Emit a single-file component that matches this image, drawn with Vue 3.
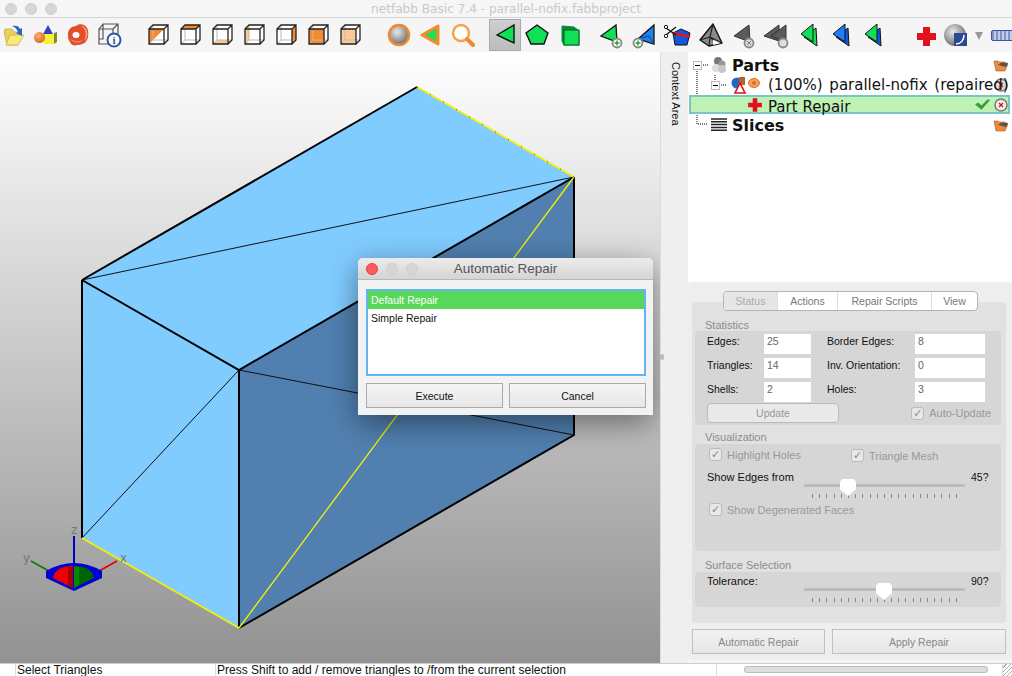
<template>
  <div class="window">
    <div class="titlebar">
      <span class="light"></span><span class="light"></span><span class="light"></span>
      <span class="title">netfabb Basic 7.4 - parallel-nofix.fabbproject</span>
    </div>

    <div class="toolbar">
      <div class="group">
        <svg class="ic" viewBox="0 0 32 32">
          <path d="M7 13l1-3h7l2 3h5l-2 13H10z" fill="#e8cf58" stroke="#cdb044" stroke-width=".8" />
          <path d="M9 26l4-10h14l-6 10z" fill="#f8ea7a" stroke="#cdb044" stroke-width=".8" />
          <path d="M15 7c4-1 7 0 8 3l2-1v8l-6-3 2-1c-1-3-3-5-6-6z" fill="#2a62c8" />
        </svg>
        <svg class="ic" viewBox="0 0 32 32">
          <defs>
            <radialGradient id="orange" cx="40%" cy="35%" r="70%">
              <stop offset="0" stop-color="#ffb070" />
              <stop offset="1" stop-color="#d8641c" />
            </radialGradient>
          </defs>
          <path d="M19 6l6 11H13z" fill="#3340c4" />
          <path d="M15 15h10v10H15z" fill="#f6f038" />
          <path d="M25 14l3-1v10l-3 2z" fill="#8a8820" />
          <circle cx="10.500" cy="18.500" r="5.500" fill="url(#orange)" />
        </svg>
        <svg class="ic" viewBox="0 0 32 32">
          <path d="M7 15c0-5 4-8 8-8 2-2 5-2 8-1 4 2 5 7 4 12-1 6-6 8-11 8-3 1-6 0-7-3-2-2-2-5-2-8z" fill="#e2502a" />
          <path d="M20 7c5 3 6 9 3 15 3-2 4-6 3-10-1-3-3-5-6-5z" fill="#f4a080" />
          <path d="M9 20c3 4 9 5 13 1-4 2-9 1-13-1z" fill="#f08a60" />
          <ellipse cx="15" cy="16" rx="3.500" ry="3" fill="#fff" />
        </svg>
        <svg class="ic" viewBox="0 0 32 32">
          <path d="M6 10h14v15H6zM6 10l4-5h15v14l-5 6M20 10l5-5M10 5v15H6" fill="none" stroke="#555" stroke-width="1.200" />
          <circle cx="21" cy="21" r="6.500" fill="#fff" stroke="#33569c" stroke-width="2" />
          <text x="21" y="25" class="ic-i">i</text>
        </svg>
      </div>

      <div class="group cubes">
        <svg v-for="c in cubes" :key="c.id" class="ic" viewBox="0 0 32 32">
          <rect x="7" y="10" width="15" height="15" fill="#fff" />
          <path d="M7 10l4-4h15l-4 4z" fill="#fff" />
          <path d="M22 10l4-4v15l-4 4z" fill="#fff" />
          <polygon :points="c.pts" :fill="c.fill" />
          <path d="M11 6v15H26M11 21l-4 4" fill="none" stroke="#bbb" />
          <path d="M7 10h15v15H7zM7 10l4-4h15v15l-4 4M22 10l4-4" fill="none" stroke="#222" stroke-width="1.300" />
        </svg>
      </div>

      <div class="group views">
        <svg class="ic" viewBox="0 0 32 32">
          <defs>
            <radialGradient id="ball" cx="40%" cy="35%" r="70%">
              <stop offset="0" stop-color="#e8e8e8" />
              <stop offset="1" stop-color="#666" />
            </radialGradient>
          </defs>
          <circle cx="16" cy="16" r="10" fill="url(#ball)" stroke="#f08a30" stroke-width="2.500" />
        </svg>
        <svg class="ic" viewBox="0 0 32 32">
          <path d="M7 16l16-9v18z" fill="#22dd55" stroke="#f58a2c" stroke-width="3" stroke-linejoin="round" />
        </svg>
        <svg class="ic" viewBox="0 0 32 32">
          <circle cx="14" cy="14" r="8" fill="#fff" stroke="#f8a24a" stroke-width="2.500" />
          <path d="M20 20l6 6" stroke="#f08a30" stroke-width="4" stroke-linecap="round" />
        </svg>
      </div>

      <div class="group picks">
        <svg class="ic active" viewBox="0 0 32 32">
          <path d="M8 16l17-10v18z" fill="#0fe055" stroke="#111" stroke-width="1.400" />
        </svg>
        <svg class="ic" viewBox="0 0 32 32">
          <path d="M16 6l11 8-4 11H10L5 14z" fill="#0fe055" stroke="#111" stroke-width="1.400" />
        </svg>
        <svg class="ic" viewBox="0 0 32 32">
          <path d="M9 7l12 1 5 4v14H11L9 22z" fill="#0a8a30" stroke="#084" />
          <rect x="11" y="11" width="15" height="15" fill="#0fe055" stroke="#0a5a20" />
        </svg>
      </div>

      <div class="group wide">
        <svg class="ic" viewBox="0 0 32 32">
          <path d="M5 17L20 6l1 17z" fill="#0fe055" stroke="#111" stroke-width="1.300" />
          <circle cx="21" cy="24" r="4.500" fill="#fff" stroke="#888" stroke-width="1.800" />
          <path d="M18.500 24h5M21 21.500v5" stroke="#2a2" stroke-width="1.500" />
        </svg>
        <svg class="ic" viewBox="0 0 32 32">
          <path d="M9 20L25 6v19z" fill="#1f7fee" stroke="#111" stroke-width="1.300" />
          <path d="M9 20l11-3 5 8" fill="none" stroke="#0c3f90" />
          <circle cx="9" cy="24" r="4.500" fill="#fff" stroke="#888" stroke-width="1.800" />
          <path d="M6.500 24h5M9 21.500v5" stroke="#2a2" stroke-width="1.500" />
        </svg>
        <svg class="ic" viewBox="0 0 32 32">
          <path d="M11 14l8-4 9 4-3 12H13z" fill="#1158dd" stroke="#111" />
          <path d="M11 14l17 4" stroke="#e11" stroke-width="2.600" />
          <path d="M4 9l10 7M4 16l10-8" stroke="#111" stroke-width="1.300" />
          <circle cx="4" cy="8" r="1.700" fill="#fff" stroke="#111" />
          <circle cx="4" cy="17" r="1.700" fill="#fff" stroke="#111" />
        </svg>
        <svg class="ic" viewBox="0 0 32 32">
          <path d="M18 5l9 19-13 3-9-6z" fill="#8a8a8a" stroke="#111" stroke-width="1.400" stroke-linejoin="round" />
          <path d="M18 21l8 3-8 2z" fill="#fff" />
          <path d="M18 5l-3 13 12 6M5 21l10-3-1 9M15 18l3 3" fill="none" stroke="#222" stroke-width="1.200" />
        </svg>
        <svg class="ic" viewBox="0 0 32 32">
          <path d="M6 17L21 6l1 17z" fill="#5a5a5a" stroke="#333" />
          <circle cx="21" cy="24" r="4.500" fill="#ddd" stroke="#888" stroke-width="1.800" />
          <path d="M19 22l4 4M23 22l-4 4" stroke="#777" />
        </svg>
        <svg class="ic" viewBox="0 0 32 32">
          <path d="M3 17L18 6v16z" fill="#5a5a5a" stroke="#333" />
          <path d="M10 17L25 6v17z" fill="#5a5a5a" stroke="#333" />
          <circle cx="22" cy="24" r="4.500" fill="#ddd" stroke="#888" stroke-width="1.800" />
        </svg>
      </div>

      <div class="group">
        <svg class="ic" viewBox="0 0 32 32">
          <path d="M11 18l12-9 1 18z" fill="#0fe055" stroke="#111" />
          <path d="M8 15L20 5v18z" fill="#0fe055" stroke="#111" />
        </svg>
        <svg class="ic" viewBox="0 0 32 32">
          <path d="M11 18l12-9 1 18z" fill="#1158dd" stroke="#111" />
          <path d="M8 15L20 5v18z" fill="#1f7fee" stroke="#111" />
        </svg>
        <svg class="ic" viewBox="0 0 32 32">
          <path d="M11 18l12-9 1 18z" fill="#1158dd" stroke="#111" />
          <path d="M8 15L20 5v18z" fill="#0fe055" stroke="#111" />
        </svg>
      </div>

      <div class="group tail">
        <svg class="ic" viewBox="0 0 32 32">
          <path d="M13 7h7v6h6v7h-6v6h-7v-6H7v-7h6z" fill="#e0101c" />
        </svg>
        <svg class="ic" viewBox="0 0 32 32">
          <circle cx="13" cy="15" r="11" fill="url(#ball)" />
          <rect x="12" y="13" width="13" height="13" fill="#2a4a94" />
          <path d="M14 24c5 0 8-4 8-9" fill="none" stroke="#fff" stroke-width="1.500" />
        </svg>
        <span class="drop"></span>
        <div class="ruler"></div>
      </div>
    </div>

    <div class="main">
      <div class="viewport">
        <svg class="scene" viewBox="0 0 660 611">
          <g transform="translate(0 -52)">
            <polygon points="82,280 417,87 574,177 239,370" fill="#80ccff" />
            <polygon points="82,280 239,370 239,628 82,538" fill="#80ccff" />
            <polygon points="239,370 574,177 574,435 239,628" fill="#5180b0" />
            <path d="M82 280L574 177M239 370L82 538M239 370L574 435" stroke="#111" fill="none" />
            <path d="M82 280L417 87M82 280L239 370L574 177M82 280V538M239 370V628M574 177V435L239 628" stroke="#000" stroke-width="2" fill="none" />
            <path d="M417 87L574 177M82 538L239 628" stroke="#f6f000" stroke-width="1.700" fill="none" />
            <path d="M239 628L574 177" stroke="#f6f000" stroke-width="1.300" fill="none" />
            <path d="M417 87L574 177" stroke="#222" stroke-width=".8" stroke-dasharray="1 14" fill="none" />

            <path d="M74 564V536" stroke="#0000c8" stroke-width="2" />
            <path d="M31 561L56 575" stroke="#008000" stroke-width="1.500" />
            <path d="M117 561L92 575" stroke="#e00000" stroke-width="1.500" />
            <path d="M46 571Q74 555 102 571V578L74 591 46 578z" fill="#0000d8" />
            <path d="M53 578Q55 566 73 566V588z" fill="#f00000" />
            <path d="M68 567h5v21l-5-2z" fill="#a80000" />
            <path d="M74 566Q92 566 94 578L74 588z" fill="#006400" />
            <path d="M74 567h5v18l-5 3z" fill="#008a00" />
            <text x="71" y="534" class="axis">z</text>
            <text x="23" y="562" class="axis">y</text>
            <text x="120" y="562" class="axis">x</text>
          </g>
        </svg>

        <div class="dialog">
          <div class="dialog-title">
            <span class="light red"></span><span class="light"></span><span class="light"></span>
            <span class="dialog-name">Automatic Repair</span>
          </div>
          <div class="dialog-body">
            <div class="listbox">
              <div class="list-row selected">Default Repair</div>
              <div class="list-row">Simple Repair</div>
            </div>
            <div class="dialog-buttons">
              <button class="dlg-btn">Execute</button>
              <button class="dlg-btn">Cancel</button>
            </div>
          </div>
        </div>
      </div>

      <div class="context">
        <span class="context-label">Context Area</span>
        <span class="grip"></span>
      </div>

      <div class="side">
        <div class="tree">
          <svg class="tree-lines" width="324" height="90">
            <path d="M13 13H20M9 17V72H20M27 23V29M31 33H38M45 43V52H59" stroke="#000" stroke-dasharray="1 1" fill="none" />
            <rect x="5.500" y="9.500" width="8" height="8" fill="#fff" stroke="#bbb" />
            <path d="M7 13.500h5" stroke="#000" />
            <rect x="23.500" y="29.500" width="8" height="8" fill="#fff" stroke="#bbb" />
            <path d="M25 33.500h5" stroke="#000" />
          </svg>
          <div class="row bold parts">
            <svg class="tree-ic" viewBox="0 0 20 18">
              <circle cx="9" cy="5" r="4" fill="#777" />
              <circle cx="13" cy="8" r="3.500" fill="#999" />
              <circle cx="7" cy="12" r="4" fill="#ddd" />
              <circle cx="13" cy="13" r="4" fill="#c8c8c8" />
            </svg>
            <span>Parts</span>
            <svg class="folder" viewBox="0 0 16 13">
              <path d="M1 2h4l1 1h5l4 2-3 7H3z" fill="#f08a3a" stroke="#a85a20" stroke-width=".6" />
              <path d="M5 6c3-3 5-3 10-2l-2 4c-3-1-5-1-8-2z" fill="#555" />
            </svg>
          </div>
          <div class="row model">
            <svg class="model-ic" viewBox="0 0 36 18">
              <circle cx="6" cy="7" r="5.500" fill="#1f68c8" />
              <rect x="8" y="1" width="6" height="8" fill="#b8622a" />
              <path d="M9 7l5 10H4z" fill="#fff" stroke="#e01010" stroke-width="1.600" />
              <ellipse cx="23" cy="7" rx="5.500" ry="4.500" fill="#f2a060" stroke="#e07020" />
              <circle cx="23" cy="7" r="2" fill="#e07020" />
            </svg>
            <span class="model-name">(100%) parallel-nofix (repaired)</span>
            <svg class="close under" viewBox="0 0 14 14">
              <circle cx="7" cy="7" r="6" fill="#ddd" stroke="#777" stroke-width="1.500" />
              <path d="M5 5l4 4M9 5l-4 4" stroke="#e01010" stroke-width="1.300" />
            </svg>
          </div>
          <div class="row repair">
            <svg class="cross" viewBox="0 0 14 14">
              <path d="M5 1h4v4h4v4H9v4H5V9H1V5h4z" fill="#e0101c" />
            </svg>
            <span class="repair-name">Part Repair</span>
            <svg class="check" viewBox="0 0 16 12">
              <path d="M1 6l3-2 3 3 6-6 2 1-8 9z" fill="#3a9a3a" />
            </svg>
            <svg class="close" viewBox="0 0 14 14">
              <circle cx="7" cy="7" r="6" fill="#eee" stroke="#777" stroke-width="1.500" />
              <path d="M5 5l4 4M9 5l-4 4" stroke="#e01010" stroke-width="1.300" />
            </svg>
          </div>
          <div class="row bold slices">
            <svg class="tree-ic" viewBox="0 0 20 14">
              <path d="M2 1h16M2 3.800h16M2 6.600h16M2 9.400h16M2 12.200h16" stroke="#222" stroke-width="1.500" />
            </svg>
            <span>Slices</span>
            <svg class="folder" viewBox="0 0 16 13">
              <path d="M1 2h4l1 1h5l4 2-3 7H3z" fill="#f08a3a" stroke="#a85a20" stroke-width=".6" />
              <path d="M5 6c3-3 5-3 10-2l-2 4c-3-1-5-1-8-2z" fill="#555" />
            </svg>
          </div>
        </div>

        <div class="panel">
          <div class="tabs">
            <span class="tab current">Status</span>
            <span class="tab">Actions</span>
            <span class="tab">Repair Scripts</span>
            <span class="tab">View</span>
          </div>
          <div class="tab-body">
            <div class="legend first">Statistics</div>
            <div class="box stats">
              <div class="stat-grid">
                <template v-for="s in stats" :key="s.a">
                  <label>{{ s.a }}</label><span class="field">{{ s.av }}</span>
                  <label>{{ s.b }}</label><span class="field">{{ s.bv }}</span>
                </template>
              </div>
              <div class="stat-foot">
                <button class="update">Update</button>
                <span class="chk"><i class="box-ic">&#10003;</i>Auto-Update</span>
              </div>
            </div>

            <div class="legend">Visualization</div>
            <div class="box vis">
              <div class="chk-row">
                <span class="chk"><i class="box-ic">&#10003;</i>Highlight Holes</span>
                <span class="chk mesh"><i class="box-ic">&#10003;</i>Triangle Mesh</span>
              </div>
              <div class="slider-row">
                <span class="slider-label">Show Edges from</span>
                <div class="slider">
                  <div class="track"><span class="thumb" style="left: 36px"></span></div>
                  <div class="ticks"><i v-for="n in 21" :key="n"></i></div>
                </div>
                <span class="slider-val">45?</span>
              </div>
              <span class="chk degen"><i class="box-ic">&#10003;</i>Show Degenerated Faces</span>
            </div>

            <div class="legend surface">Surface Selection</div>
            <div class="box surf">
              <div class="slider-row">
                <span class="slider-label">Tolerance:</span>
                <div class="slider">
                  <div class="track"><span class="thumb" style="left: 72px"></span></div>
                  <div class="ticks"><i v-for="n in 21" :key="n"></i></div>
                </div>
                <span class="slider-val">90?</span>
              </div>
            </div>
          </div>
          <div class="panel-buttons">
            <button class="panel-btn auto">Automatic Repair</button>
            <button class="panel-btn apply">Apply Repair</button>
          </div>
        </div>
      </div>
    </div>

    <div class="statusbar">
      <span class="st-left">Select Triangles</span>
      <span class="st-mid">Press Shift to add / remove triangles to /from the current selection</span>
      <span class="st-scroll"><i></i></span>
      <span class="st-grip"></span>
    </div>
  </div>
</template>

<script setup>
// faces of the small cube buttons
const cubes = [
  { id: "diag", pts: "7,10 22,10 7,25", fill: "#f58a2c" },
  { id: "top", pts: "7,10 11,6 26,6 22,10", fill: "#f58a2c" },
  { id: "bottom", pts: "11,21 26,21 22,25 7,25", fill: "#fcc894" },
  { id: "left", pts: "7,10 11,6 11,21 7,25", fill: "#fcc894" },
  { id: "right", pts: "22,10 26,6 26,21 22,25", fill: "#f58a2c" },
  { id: "front", pts: "7,10 22,10 22,25 7,25", fill: "#f58a2c" },
  { id: "back", pts: "7,10 22,10 22,25 7,25", fill: "#fcc894" },
];

const stats = [
  { a: "Edges:", av: "25", b: "Border Edges:", bv: "8" },
  { a: "Triangles:", av: "14", b: "Inv. Orientation:", bv: "0" },
  { a: "Shells:", av: "2", b: "Holes:", bv: "3" },
];
</script>

<style>
html,
body {
  margin: 0;
  background: #f5f5f5;
}
</style>

<style scoped>
.window {
  width: 1012px;
  height: 676px;
  display: flex;
  flex-direction: column;
  overflow: hidden;
  font-family: "Liberation Sans", Arial, sans-serif;
  background: #f5f5f5;
}

.titlebar {
  position: relative;
  height: 17px;
  flex: none;
  display: flex;
  align-items: center;
  gap: 8px;
  padding-left: 5px;
  background: #f6f6f6;
  border-bottom: 1px solid #d6d6d6;
}

.light {
  width: 12px;
  height: 12px;
  border-radius: 50%;
  background: #d6d6d6;
  border: 1px solid #cfcfcf;
  box-sizing: border-box;
}

.light.red {
  background: #fc5b57;
  border-color: #e0443e;
}

.title {
  position: absolute;
  left: 0;
  right: 0;
  text-align: center;
  font-family: "DejaVu Sans", sans-serif;
  font-size: 12.100px;
  color: #c9c9c9;
}

.toolbar {
  height: 34px;
  flex: none;
  display: flex;
  margin-left: -3px;
  padding-top: 1px;
  box-sizing: border-box;
}

.group {
  display: flex;
  flex: none;
}

.cubes {
  margin-left: 17px;
}

.views {
  margin-left: 17px;
}

.picks {
  margin-left: 10px;
}

.wide {
  margin-left: 11px;
  gap: 1px;
}

.tail {
  margin-left: 21px;
  align-items: center;
}

.ic {
  width: 32px;
  height: 32px;
  flex: none;
}

.ic.active {
  background: linear-gradient(#d0d0d0, #bcbcbc);
  box-shadow: inset 0 0 0 1px #aaa;
}

.ic-i {
  font: bold 11px "Liberation Serif", serif;
  fill: #33569c;
  text-anchor: middle;
}

.drop {
  width: 0;
  height: 0;
  margin-left: 1px;
  border-left: 4px solid transparent;
  border-right: 4px solid transparent;
  border-top: 8px solid #999;
}

.ruler {
  width: 24px;
  height: 9px;
  margin-left: 8px;
  flex: none;
  border-radius: 2px;
  background: repeating-linear-gradient(90deg, #7f93c8 0 2px, #c4cde8 2px 4px);
  border: 1px solid #3c559c;
}

.main {
  flex: 1;
  min-height: 0;
  display: flex;
}

.viewport {
  position: relative;
  width: 660px;
  flex: none;
  background: linear-gradient(#ffffff, #929292);
}

.scene {
  display: block;
  width: 660px;
  height: 611px;
}

.axis {
  font: 12px "DejaVu Sans", sans-serif;
  fill: #777;
}

.dialog {
  position: absolute;
  left: 358px;
  top: 206px;
  width: 295px;
  height: 157px;
  display: flex;
  flex-direction: column;
  border-radius: 5px 5px 0 0;
  background: #f2f2f2;
  box-shadow: 0 8px 30px rgba(0, 0, 0, 0.45);
}

.dialog-title {
  position: relative;
  height: 21px;
  flex: none;
  display: flex;
  align-items: center;
  gap: 8px;
  padding-left: 8px;
  background: linear-gradient(#ececec, #d4d4d4);
  border-bottom: 1px solid #b8b8b8;
  border-radius: 5px 5px 0 0;
}

.dialog-name {
  position: absolute;
  left: 0;
  right: 0;
  text-align: center;
  font-size: 13.500px;
  color: #555;
}

.dialog-body {
  padding: 9px 7px 7px 8px;
  display: flex;
  flex-direction: column;
  gap: 7px;
}

.listbox {
  height: 87px;
  box-sizing: border-box;
  background: #fff;
  border: 2px solid #62b4f2;
  font-size: 10.500px;
  color: #111;
}

.list-row {
  height: 18px;
  line-height: 18px;
  padding-left: 3px;
}

.list-row.selected {
  background: #58d858;
  color: #fff;
}

.dialog-buttons {
  display: flex;
  gap: 6px;
}

.dlg-btn {
  flex: 1;
  height: 25px;
  padding: 0;
  font: 10.500px "Liberation Sans", sans-serif;
  color: #111;
  background: linear-gradient(#f6f6f6, #e6e6e6);
  border: 1px solid #aaa;
}

.context {
  position: relative;
  width: 28px;
  flex: none;
  box-sizing: border-box;
  padding: 10px 0 0 9px;
  background: #efefef;
  border-left: 1px solid #dcdcdc;
}

.context-label {
  display: block;
  writing-mode: vertical-rl;
  font-size: 11px;
  color: #111;
}

.grip {
  position: absolute;
  left: -1px;
  top: 302px;
  width: 4px;
  height: 6px;
  background: #bbb;
  border-radius: 2px;
}

.side {
  width: 324px;
  flex: none;
  display: flex;
  flex-direction: column;
}

.tree {
  position: relative;
  height: 230px;
  flex: none;
  box-sizing: border-box;
  padding-top: 3px;
  background: #fff;
  font-family: "DejaVu Sans", sans-serif;
  font-size: 15px;
  color: #111;
}

.tree-lines {
  position: absolute;
  left: 0;
  top: 0;
}

.row {
  position: relative;
  height: 20px;
  display: flex;
  align-items: center;
  white-space: nowrap;
}

.bold {
  font-weight: bold;
  font-size: 16px;
  padding-left: 21px;
}

.tree-ic {
  width: 20px;
  height: 18px;
  margin-right: 3px;
}

.folder {
  width: 16px;
  height: 13px;
  margin-left: auto;
  margin-right: 3px;
}

.model {
  padding-left: 43px;
}

.model-ic {
  width: 36px;
  height: 18px;
  flex: none;
}

.model-name {
  margin-left: 1px;
  position: relative;
  z-index: 1;
  word-spacing: 2px;
}

.close {
  width: 14px;
  height: 14px;
  flex: none;
}

.close.under {
  position: absolute;
  right: 4px;
  top: 3px;
}

.repair {
  margin-left: 1px;
  width: 321px;
  height: 19px;
  box-sizing: border-box;
  padding-left: 56px;
  background: #bdf2b4;
  border: 2px solid #79c6c4;
}

.repair-name {
  position: relative;
  top: 2px;
}

.cross {
  width: 16px;
  height: 16px;
  margin-right: 5px;
}

.check {
  width: 17px;
  height: 13px;
  margin-left: auto;
  margin-right: 3px;
}

.slices {
  margin-top: 1px;
}

.panel {
  flex: 1;
  min-height: 0;
  margin-bottom: 3px;
  padding: 9px 6px 7px 4px;
  box-sizing: border-box;
  position: relative;
  background: #eeeeee;
  border-radius: 5px;
  display: flex;
  flex-direction: column;
  font-size: 10.500px;
}

.tabs {
  position: absolute;
  left: 35px;
  top: 9px;
  height: 20px;
  display: flex;
  z-index: 1;
  background: #fff;
  border: 1px solid #b4b4b4;
  border-radius: 4px;
  box-sizing: border-box;
  overflow: hidden;
  color: #777;
}

.tab {
  display: flex;
  align-items: center;
  justify-content: center;
  border-left: 1px solid #ddd;
  width: 59px;
  height: 18px;
}

.tab:nth-child(1) {
  border-left: 0;
  width: 53px;
  background: #e6e6e6;
  color: #aaa;
}

.tab:nth-child(3) {
  width: 93px;
}

.tab:nth-child(4) {
  width: 45px;
}

.tab-body {
  height: 321px;
  flex: none;
  margin-top: 11px;
  box-sizing: border-box;
  padding: 17px 5px 0 3px;
  background: #e1e1e1;
  border-radius: 4px;
}

.legend {
  height: 12px;
  line-height: 12px;
  padding-left: 10px;
  color: #8c8c8c;
  margin-top: 6px;
  font-size: 11px;
}

.legend.first {
  margin-top: 0;
}

.legend.surface {
  margin-top: 8px;
}

.box {
  background: #d6d6d6;
  border-radius: 4px;
  box-sizing: border-box;
}

.stats {
  height: 94px;
  padding: 3px 0 0 12px;
}

.stat-grid {
  display: grid;
  grid-template-columns: 57px 47px 104px 70px;
  grid-auto-rows: 24px;
  align-items: start;
}

.stat-grid label {
  color: #111;
  line-height: 15px;
}

.stat-grid label:nth-child(4n + 3) {
  margin-left: 16px;
}

.field {
  display: block;
  height: 20px;
  line-height: 15px;
  padding-left: 3px;
  box-sizing: border-box;
  background: #fff;
  color: #666;
}

.stat-foot {
  display: flex;
  align-items: center;
  justify-content: space-between;
  margin-top: -3px;
  padding-right: 10px;
}

.update {
  width: 132px;
  height: 20px;
  padding: 0;
  font: 10.500px "Liberation Sans", sans-serif;
  color: #999;
  background: #e9e9e9;
  border: 1px solid #bbb;
  border-radius: 4px;
}

.chk {
  display: inline-flex;
  align-items: center;
  color: #999;
  font-size: 11px;
}

.box-ic {
  width: 13px;
  height: 13px;
  box-sizing: border-box;
  margin-right: 5px;
  display: flex;
  align-items: center;
  justify-content: center;
  font-style: normal;
  font-size: 11px;
  font-family: "DejaVu Sans", sans-serif;
  color: #888;
  background: #e8e8e8;
  border: 1px solid #bbb;
  border-radius: 3px;
}

.vis {
  height: 107px;
  padding: 3px 0 0 14px;
  margin-top: 1px;
}

.chk-row {
  display: flex;
  align-items: center;
}

.mesh {
  margin-left: 50px;
  margin-top: 2px;
}

.slider-row {
  display: flex;
  margin-top: 9px;
  color: #111;
}

.slider-label {
  width: 97px;
  flex: none;
  margin-left: -2px;
  font-size: 11px;
}

.slider {
  width: 161px;
  flex: none;
  padding-top: 13px;
}

.track {
  position: relative;
  height: 3px;
  border-radius: 2px;
  background: #bbb;
}

.thumb {
  position: absolute;
  top: -5px;
  width: 16px;
  height: 17px;
  background: #fff;
  clip-path: polygon(15% 0, 85% 0, 100% 15%, 100% 60%, 50% 100%, 0 60%, 0 15%);
}

.ticks {
  display: flex;
  justify-content: space-between;
  margin: 7px 8px 0;
}

.ticks i {
  width: 1px;
  height: 4px;
  background: #888;
}

.slider-val {
  margin-left: 6px;
}

.degen {
  margin-top: 5px;
}

.surf {
  height: 35px;
  padding: 3px 0 0 14px;
  margin-top: 1px;
}

.surf .slider-row {
  margin-top: 0;
}

.panel-buttons {
  display: flex;
  gap: 7px;
  margin-top: 6px;
}

.panel-btn {
  height: 25px;
  padding: 0;
  font: 10.500px "Liberation Sans", sans-serif;
  color: #888;
  background: linear-gradient(#f2f2f2, #e6e6e6);
  border: 1px solid #c0c0c0;
}

.auto {
  width: 133px;
}

.apply {
  width: 174px;
}

.statusbar {
  height: 13px;
  flex: none;
  box-sizing: border-box;
  position: relative;
  display: flex;
  align-items: flex-start;
  background: #fff;
  border-top: 1px solid #ccc;
  font-size: 12px;
  color: #111;
  overflow: hidden;
}

.st-left {
  width: 198px;
  margin-left: 15px;
  padding-left: 1px;
  border-left: 1px solid #ddd;
  flex: none;
  height: 12px;
  line-height: 12px;
}

.st-mid {
  width: 499px;
  padding-left: 1px;
  flex: none;
  border-left: 1px solid #ddd;
  border-right: 1px solid #ddd;
  height: 12px;
  line-height: 12px;
}

.st-scroll {
  margin-left: 27px;
  width: 244px;
  flex: none;
  padding-top: 2px;
}

.st-scroll i {
  display: block;
  height: 5px;
  border-radius: 3px;
  background: #ddd;
  border: 1px solid #bbb;
}

.st-grip {
  margin-left: 14px;
  width: 12px;
  height: 13px;
  background: repeating-linear-gradient(135deg, #fff 0 2px, #aaa 2px 3px);
  border-left: 1px solid #ddd;
}
</style>
